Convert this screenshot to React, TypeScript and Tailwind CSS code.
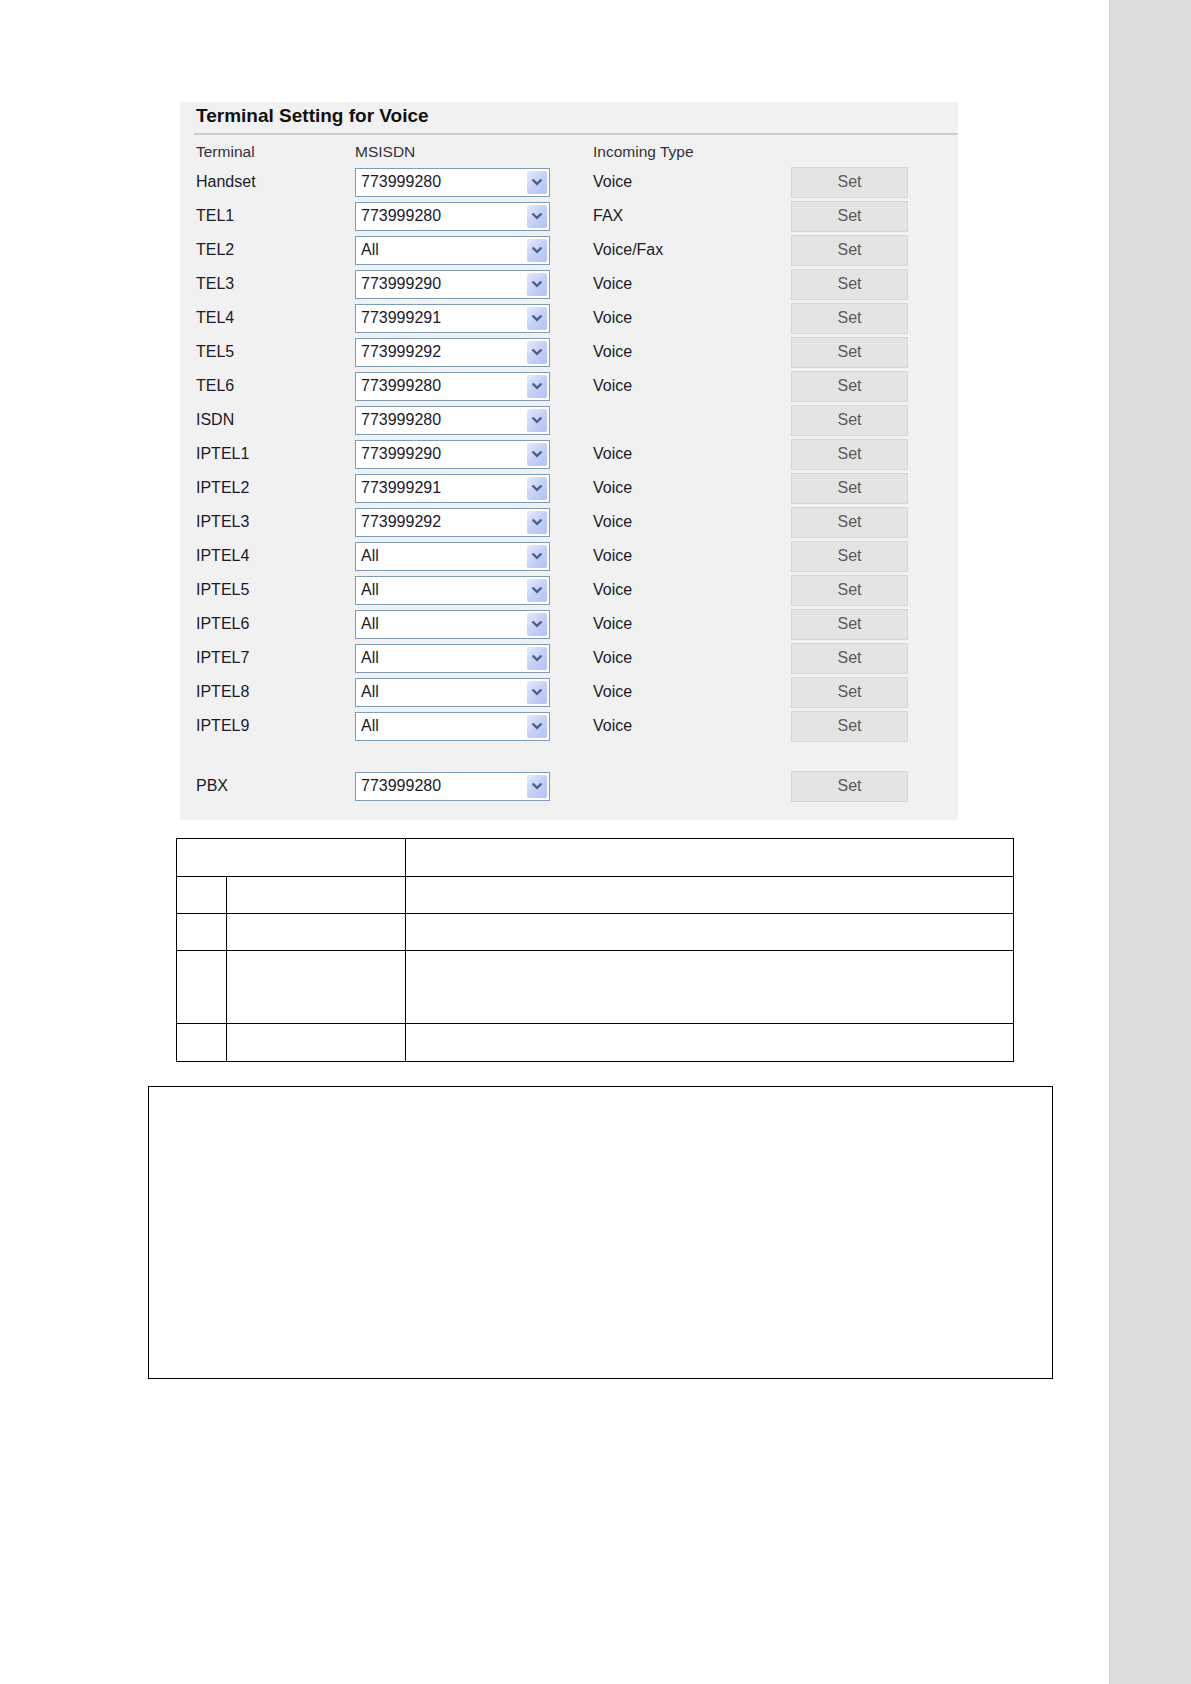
const rows: [string, string, string][] = [
  ["Handset", "773999280", "Voice"],
  ["TEL1", "773999280", "FAX"],
  ["TEL2", "All", "Voice/Fax"],
  ["TEL3", "773999290", "Voice"],
  ["TEL4", "773999291", "Voice"],
  ["TEL5", "773999292", "Voice"],
  ["TEL6", "773999280", "Voice"],
  ["ISDN", "773999280", ""],
  ["IPTEL1", "773999290", "Voice"],
  ["IPTEL2", "773999291", "Voice"],
  ["IPTEL3", "773999292", "Voice"],
  ["IPTEL4", "All", "Voice"],
  ["IPTEL5", "All", "Voice"],
  ["IPTEL6", "All", "Voice"],
  ["IPTEL7", "All", "Voice"],
  ["IPTEL8", "All", "Voice"],
  ["IPTEL9", "All", "Voice"],
];

const Select = ({ value }: { value: string }) => (
  <div className="relative flex h-[29px] w-[195px] items-center border border-[#7f9db9] bg-white pl-[5px] text-[16px] text-[#1c1a28]">
    <span>{value}</span>
    <div className="absolute top-[2px] right-[2px] bottom-[2px] flex w-[20px] items-center justify-center rounded-[2px] bg-gradient-to-br from-[#e6e9fc] via-[#c6d1f7] to-[#b2c2f0]">
      <svg width="12" height="8" viewBox="0 0 12 8">
        <path d="M1.5 1.5 L6 5.8 L10.5 1.5" fill="none" stroke="#4a5f86" strokeWidth="2.4" />
      </svg>
    </div>
  </div>
);

const SetButton = () => (
  <button className="h-[31px] w-[117px] border border-[#d6d6d6] bg-[#e4e4e4] text-[16px] text-[#5a5a5a]">
    Set
  </button>
);

const Row = ({ label, value, type }: { label: string; value: string; type: string }) => (
  <div className="grid h-[34px] grid-cols-[159px_238px_198px_117px] items-center pl-[16px] text-[16px] text-[#1c1a28]">
    <span>{label}</span>
    <Select value={value} />
    <span>{type}</span>
    <SetButton />
  </div>
);

export default function App() {
  return (
    <div className="flex min-h-[1684px] w-full bg-white font-['Liberation_Sans',Arial,sans-serif]">
      <div className="flex w-[1109px] flex-col">
        {/* voice settings panel */}
        <div className="mt-[102px] ml-[180px] flex h-[718px] w-[778px] flex-col bg-[#f1f1f1] pt-[3px]">
          <div className="ml-[14px] border-b-2 border-[#cacaca] pb-[6px] pl-[2px]">
            <h2 className="text-[19px] leading-[22px] font-bold text-[#111]">Terminal Setting for Voice</h2>
          </div>
          <div className="mt-[5px] grid h-[20px] grid-cols-[159px_238px_198px_117px] items-center pl-[16px] text-[15.5px] text-[#33323c]">
            <span>Terminal</span>
            <span>MSISDN</span>
            <span>Incoming Type</span>
            <span />
          </div>
          <div className="mt-[5px] flex flex-col">
            {rows.map(([label, value, type]) => (
              <Row key={label} label={label} value={value} type={type} />
            ))}
          </div>
          <div className="h-[26px]" />
          <Row label="PBX" value="773999280" type="" />
        </div>

        {/* blank table */}
        <table className="mt-[18px] ml-[176px] w-[838px] border-collapse">
          <tbody>
            <tr className="h-[38px]">
              <td colSpan={2} className="w-[229px] border-[1.5px] border-black" />
              <td className="border-[1.5px] border-black" />
            </tr>
            <tr className="h-[37px]">
              <td className="w-[50px] border-[1.5px] border-black" />
              <td className="w-[179px] border-[1.5px] border-black" />
              <td className="border-[1.5px] border-black" />
            </tr>
            <tr className="h-[37px]">
              <td className="border-[1.5px] border-black" />
              <td className="border-[1.5px] border-black" />
              <td className="border-[1.5px] border-black" />
            </tr>
            <tr className="h-[73px]">
              <td className="border-[1.5px] border-black" />
              <td className="border-[1.5px] border-black" />
              <td className="border-[1.5px] border-black" />
            </tr>
            <tr className="h-[38px]">
              <td className="border-[1.5px] border-black" />
              <td className="border-[1.5px] border-black" />
              <td className="border-[1.5px] border-black" />
            </tr>
          </tbody>
        </table>

        {/* note box */}
        <div className="mt-[24px] ml-[148px] h-[293px] w-[905px] border-[1.5px] border-black" />
      </div>

      {/* side margin bar */}
      <div className="w-[82px] border-l border-[#d2d2d2] bg-[#dcdcdc]" />
    </div>
  );
}
